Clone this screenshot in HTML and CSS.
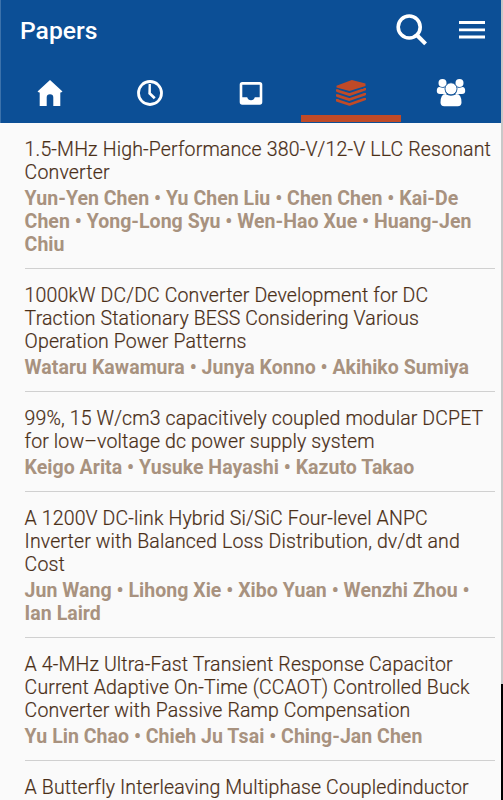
FILE: index.html
```
<!DOCTYPE html>
<html lang="en">
<head>
  <meta charset="UTF-8">
  <meta name="viewport" content="width=device-width, initial-scale=1.0">
  <title>Papers</title>
  <link rel="stylesheet" href="styles.css">
</head>
<body>
  <div class="app">
    <header class="header">
      <div class="toolbar">
        <h1 class="title">Papers</h1>
        <svg class="search-icon" width="32" height="32" viewBox="0 0 32 32">
          <circle cx="13.2" cy="13" r="11" fill="none" stroke="#fff" stroke-width="3.6"/>
          <path d="M20.8 21L29.6 29.8" stroke="#fff" stroke-width="4"/>
        </svg>
        <svg class="menu-icon" width="26" height="18" viewBox="0 0 26 18">
          <path d="M0 1.5H26M0 8.8H26M0 16H26" stroke="#fff" stroke-width="2.8"/>
        </svg>
      </div>
      <nav class="tabs">
        <a class="tab">
          <svg width="30" height="30" viewBox="0 0 30 30">
            <path d="M15 2L27.5 13.5L26 14.5H25.3V28H18.3V19.5Q18.3 16.3 15 16.3T11.7 19.5V28H4.7V14.5H4L2.5 13.5Z" fill="#fff"/>
          </svg>
        </a>
        <a class="tab">
          <svg width="30" height="30" viewBox="0 0 30 30">
            <circle cx="15" cy="15" r="11.5" fill="none" stroke="#fff" stroke-width="2.8"/>
            <path d="M13.6 6H15.9V14.8L20.7 19.3L18.8 21.3L13.3 16Z" fill="#fff"/>
          </svg>
        </a>
        <a class="tab">
          <svg width="30" height="30" viewBox="0 0 30 30">
            <path fill-rule="evenodd" d="M6.3 4H23.7Q26.3 4 26.3 6.6V24.1Q26.3 26.7 23.7 26.7H6.3Q3.7 26.7 3.7 24.1V6.6Q3.7 4 6.3 4ZM6.3 6.7V19.3H11.2Q12 22.3 15 22.3T18.8 19.3H23.7V6.7Z" fill="#fff"/>
          </svg>
        </a>
        <a class="tab active">
          <svg width="30" height="30" viewBox="0 0 30 30">
            <path d="M.5 7.8L15.8 2L29.5 5.5V8L13.5 13L.5 9.5Z" fill="#c04a27"/>
            <path d="M1.3 11.3V12.7L13.5 16.6L28.8 11.3V10M1.3 16.2V17.6L13.5 21.6L28.8 16.2V15M1.3 21.1V22.5L13.5 26.5L28.8 21.1V20" fill="none" stroke="#c04a27" stroke-width="2.7" stroke-linejoin="round"/>
          </svg>
        </a>
        <a class="tab">
          <svg width="30" height="30" viewBox="0 0 30 30">
            <g fill="#fff">
              <circle cx="6.5" cy="5" r="4"/>
              <circle cx="23.5" cy="5" r="4"/>
              <path d="M3.5 9Q6.5 10.5 9 9.3Q8.3 13.6 10.8 16H4Q.8 16 .8 13Q.8 9 3.5 9Z"/>
              <path d="M26.5 9Q23.5 10.5 21 9.3Q21.7 13.6 19.2 16H26Q29.2 16 29.2 13Q29.2 9 26.5 9Z"/>
              <circle cx="15" cy="10.8" r="6" stroke="#0c4f96" stroke-width=".8"/>
              <path d="M9.5 16.1Q15 19.4 20.5 16.1Q25.5 16.3 25.5 24.6Q25.5 28.3 21.7 28.3H8.3Q4.5 28.3 4.5 24.6Q4.5 16.3 9.5 16.1Z"/>
            </g>
          </svg>
        </a>
      </nav>
    </header>

    <main class="papers">
      <article class="paper">
        <h2 class="paper-title">1.5-MHz High-Performance 380-V/12-V LLC Resonant<br>Converter</h2>
        <p class="authors">Yun-Yen Chen • Yu Chen Liu • Chen Chen • Kai-De<br>Chen • Yong-Long Syu • Wen-Hao Xue • Huang-Jen<br>Chiu</p>
      </article>
      <article class="paper">
        <h2 class="paper-title">1000kW DC/DC Converter Development for DC<br>Traction Stationary BESS Considering Various<br>Operation Power Patterns</h2>
        <p class="authors">Wataru Kawamura • Junya Konno • Akihiko Sumiya</p>
      </article>
      <article class="paper">
        <h2 class="paper-title">99%, 15 W/cm3 capacitively coupled modular DCPET<br>for low–voltage dc power supply system</h2>
        <p class="authors">Keigo Arita • Yusuke Hayashi • Kazuto Takao</p>
      </article>
      <article class="paper">
        <h2 class="paper-title">A 1200V DC-link Hybrid Si/SiC Four-level ANPC<br>Inverter with Balanced Loss Distribution, dv/dt and<br>Cost</h2>
        <p class="authors">Jun Wang • Lihong Xie • Xibo Yuan • Wenzhi Zhou •<br>Ian Laird</p>
      </article>
      <article class="paper">
        <h2 class="paper-title">A 4-MHz Ultra-Fast Transient Response Capacitor<br>Current Adaptive On-Time (CCAOT) Controlled Buck<br>Converter with Passive Ramp Compensation</h2>
        <p class="authors">Yu Lin Chao • Chieh Ju Tsai • Ching-Jan Chen</p>
      </article>
      <article class="paper">
        <h2 class="paper-title">A Butterfly Interleaving Multiphase Coupledinductor</h2>
      </article>
    </main>
  </div>
  <div class="edge"></div>
</body>
</html>
```
FILE: styles.css
```
* {
  box-sizing: border-box;
}

body {
  margin: 0;
  height: 800px;
  display: flex;
  overflow: hidden;
  font-family: Roboto, "Liberation Sans", sans-serif;
  background: #fafafa;
}

.app {
  flex: 1;
  min-width: 0;
  height: 800px;
  overflow: hidden;
}

.edge {
  width: 2px;
  height: 800px;
  background: linear-gradient(#c8c8c8 684px, #000 684px);
}

.header {
  height: 122.5px;
  background: #0c4f96;
  border-left: 1px solid #3c72ab;
}

.toolbar {
  display: flex;
  align-items: center;
  height: 62px;
  padding: 0 16px 0 19px;
}

.title {
  flex: 1;
  margin: -2px 0 0;
  font-size: 24.7px;
  font-weight: 500;
  color: #fff;
}

.search-icon {
  margin-right: 31px;
  margin-top: -3px;
}

.menu-icon {
  margin-top: -3px;
}

.tabs {
  display: flex;
  height: 60px;
}

.tab {
  flex: 1;
  display: flex;
  justify-content: center;
  padding-top: 16px;
  border-bottom: 7px solid transparent;
}

.tab svg {
  margin-right: 2px;
}

.tab:nth-child(n+3) svg {
  margin-right: 0.4px;
}

.tab.active {
  border-color: #c04a27;
}

.papers {
  padding-left: 24.6px;
}

.paper {
  margin-right: 6px;
  padding: 16.4px 0 10.8px;
  border-bottom: 1px solid #d0d0d0;
}

.paper-title,
.authors {
  margin: 0;
  font-size: 19.5px;
  line-height: 22.85px;
  white-space: nowrap;
}

.paper-title {
  font-weight: 300;
  letter-spacing: 0.13px;
  color: #4a2f18;
  -webkit-text-stroke: 0.2px #4a2f18;
}

.paper:first-child .paper-title {
  letter-spacing: 0.16px;
}

.paper:last-child .paper-title {
  margin-top: -1px;
}

.authors {
  margin-top: 3.6px;
  font-weight: 700;
  letter-spacing: 0.03px;
  color: #a8927f;
}
```
